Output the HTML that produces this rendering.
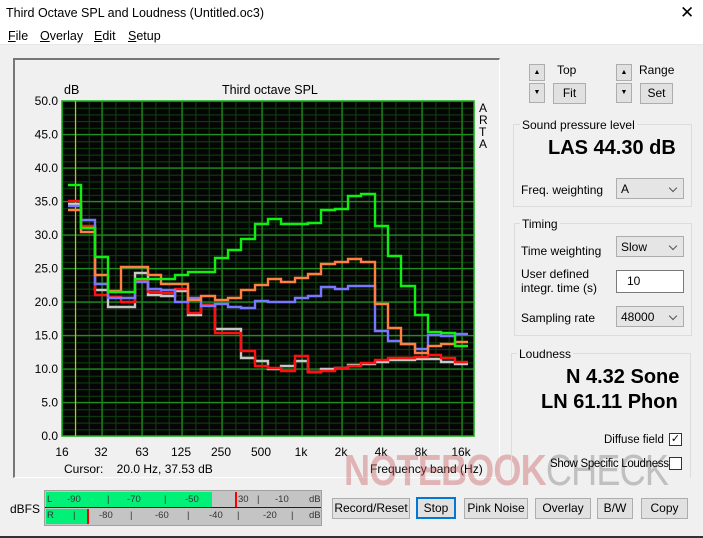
<!DOCTYPE html><html><head><style>
body{margin:0;width:703px;height:538px;background:#f0f0f0;font-family:"Liberation Sans",sans-serif;font-size:12px;color:#000;position:relative;overflow:hidden}
.a{position:absolute;white-space:nowrap}
.btn{position:absolute;background:#e1e1e1;border:1px solid #adadad;box-sizing:border-box;text-align:center;font-size:12px}
.grp{position:absolute;border:1px solid #dcdcdc;box-sizing:border-box}
.sel{position:absolute;background:#e5e5e5;border:1px solid #adadad;box-sizing:border-box;padding:3px 4px;font-size:12px}
.sel:after{content:"";position:absolute;right:7px;top:6px;width:5px;height:5px;border-right:1px solid #555;border-bottom:1px solid #555;transform:rotate(45deg)}
.u{text-decoration:underline}
</style></head><body>
<div class="a" style="left:0;top:0;width:703px;height:30px;background:#fff"></div>
<div class="a" style="left:6px;top:6px;font-size:12.5px">Third Octave SPL and Loudness (Untitled.oc3)</div>
<div class="a" style="left:680px;top:3px;font-size:17px;font-weight:200">✕</div>
<div class="a" style="left:0;top:30px;width:703px;height:14px;background:#fff"></div>
<div class="a" style="left:8px;top:29px;font-size:12.5px"><span class="u">F</span>ile</div>
<div class="a" style="left:40px;top:29px;font-size:12.5px"><span class="u">O</span>verlay</div>
<div class="a" style="left:94px;top:29px;font-size:12.5px"><span class="u">E</span>dit</div>
<div class="a" style="left:128px;top:29px;font-size:12.5px"><span class="u">S</span>etup</div>
<div class="a" style="left:0;top:44px;width:703px;height:1px;background:#e6e6e6"></div>
<div class="a" style="left:13px;top:58px;width:487px;height:420px;border-top:2px solid #777;border-left:2px solid #777;border-right:1px solid #fff;border-bottom:1px solid #fff;box-sizing:border-box"></div>
<div class="a" style="left:64px;top:83px;font-size:12.5px">dB</div>
<div class="a" style="left:222px;top:83px;font-size:12.5px">Third octave SPL</div>
<div class="a" style="left:479px;top:102px;font-size:12px;line-height:12px">A<br>R<br>T<br>A</div>
<svg class="a" style="left:0;top:0" width="703" height="538">
<defs>
<pattern id="h" x="62" y="101" width="13.333" height="6.7" patternUnits="userSpaceOnUse"><rect width="13.333" height="6.7" fill="#050505"/><path d="M0 0.5H13.4M0.5 0V6.7" stroke="#0c3f0c" stroke-width="1.2"/></pattern>
</defs>
<rect x="62" y="101" width="412" height="335" fill="url(#h)"/>
<g stroke="#1f8f1f" stroke-width="1.2">
<path d="M62 134.5H474M62 168H474M62 201.5H474M62 235H474M62 268.5H474M62 302H474M62 335.5H474M62 369H474M62 402.5H474"/>
<path d="M102 101V436M142 101V436M182 101V436M222 101V436M262 101V436M302 101V436M342 101V436M382 101V436M422 101V436M462 101V436"/>
</g>
<rect x="62" y="101" width="412" height="335" fill="none" stroke="#11b011" stroke-width="1.5"/>
<path d="M75.5 101V436" stroke="#d0c000" stroke-width="1.2"/>
<g fill="none" stroke-width="2.4">
<path stroke="#c8c8c8" d="M68 204H81V228H95V290H108V307H135V273H148V295H161V296H175V291H188V315H201V305H215V329H241V358H255V361H268V369H281V366H295V361H308V372H321V369H335V368H348V365H361V364H375V362H388V360H415V359H441V362H455V364H468"/>
<path stroke="#ff1010" d="M68 201H81V226H95V295H108V297H121V302H135V280H148V292H161V293H175V289H188V313H201V305H215V333H241V351H255V366H268V368H281V371H295V356H308V372H321V371H335V368H348V366H361V363H375V360H388V358H415V357H428V355H441V358H455V362H468"/>
<path stroke="#7878ff" d="M68 206H81V220H95V284H108V298H135V282H148V289H161V290H175V302H188V298H201V306H215V304H228V307H241V308H255V301H268V302H295V298H308V296H321V287H335V289H348V286H375V331H388V341H401V344H415V349H428V335H441V336H455V334H468"/>
<path stroke="#ff8040" d="M68 210H81V232H95V275H108V291H121V267H148V275H161V284H188V300H201V296H215V300H228V298H241V290H255V285H268V279H281V282H295V278H308V274H321V264H335V262H348V259H361V262H375V304H388V328H401V344H415V353H428V346H441V344H455V342H468"/>
<path stroke="#10f010" d="M68 185H81V228H95V257H108V292H135V279H175V275H188V272H215V258H228V250H241V239H255V224H268V219H281V224H308V223H321V210H335V209H348V196H361V194H375V226H388V256H401V286H415V315H428V332H441V333H455V346H468"/>
</g>
<g font-size="12" text-anchor="end" font-family="Liberation Sans">
<text x="58" y="105">50.0</text><text x="58" y="138.5">45.0</text><text x="58" y="172">40.0</text><text x="58" y="205.5">35.0</text><text x="58" y="239">30.0</text><text x="58" y="272.5">25.0</text><text x="58" y="306">20.0</text><text x="58" y="339.5">15.0</text><text x="58" y="373">10.0</text><text x="58" y="406.5">5.0</text><text x="58" y="440">0.0</text>
</g>
<g font-size="12" text-anchor="middle" font-family="Liberation Sans">
<text x="62" y="456">16</text><text x="101" y="456">32</text><text x="142" y="456">63</text><text x="181" y="456">125</text><text x="221" y="456">250</text><text x="261" y="456">500</text><text x="301" y="456">1k</text><text x="341" y="456">2k</text><text x="381" y="456">4k</text><text x="421" y="456">8k</text><text x="461" y="456">16k</text>
</g>
</svg>
<div class="a" style="left:64px;top:462px">Cursor:&nbsp;&nbsp;&nbsp;&nbsp;20.0 Hz, 37.53 dB</div>
<div class="a" style="left:370px;top:462px">Frequency band (Hz)</div>
<!-- meter -->
<div class="a" style="left:10px;top:502px">dBFS</div>
<div class="a" style="left:44px;top:490px;width:278px;height:36px;background:#c4c4c4;border:1px solid #a0a0a0;box-sizing:border-box"></div>
<div class="a" style="left:46px;top:492px;width:166px;height:15px;background:#00f078"></div>
<div class="a" style="left:46px;top:509px;width:41px;height:15px;background:#00f078"></div>
<div class="a" style="left:45px;top:507px;width:276px;height:1px;background:#222"></div>
<div class="a" style="left:235px;top:492px;width:2px;height:15px;background:#f00"></div>
<div class="a" style="left:87px;top:509px;width:2px;height:15px;background:#f00"></div>
<div class="a" style="left:47px;top:494px;font-size:9.5px;color:#333;width:275px">L<span style="position:absolute;left:20px">-90</span><span style="position:absolute;left:60px">|</span><span style="position:absolute;left:80px">-70</span><span style="position:absolute;left:117px">|</span><span style="position:absolute;left:138px">-50</span><span style="position:absolute;left:191px">30</span><span style="position:absolute;left:210px">|</span><span style="position:absolute;left:228px">-10</span><span style="position:absolute;left:262px">dB</span></div>
<div class="a" style="left:47px;top:510px;font-size:9.5px;color:#333;width:275px">R<span style="position:absolute;left:26px">|</span><span style="position:absolute;left:52px">-80</span><span style="position:absolute;left:83px">|</span><span style="position:absolute;left:108px">-60</span><span style="position:absolute;left:140px">|</span><span style="position:absolute;left:162px">-40</span><span style="position:absolute;left:190px">|</span><span style="position:absolute;left:216px">-20</span><span style="position:absolute;left:244px">|</span><span style="position:absolute;left:262px">dB</span></div>
<div class="a" style="left:322px;top:446px;width:370px;height:60px;overflow:hidden">
<div class="a" style="left:22px;top:0;font-size:44px;font-weight:bold;color:rgba(200,90,90,0.4);transform:scaleX(0.82);transform-origin:0 0;letter-spacing:-1px">NOTEBOOK<span style="color:rgba(120,120,120,0.4);font-weight:normal">CHECK</span></div>
</div>
<div class="btn" style="left:332px;top:498px;width:78px;height:21px;line-height:19px">Record/Reset</div>
<div class="btn" style="left:416px;top:497px;width:40px;height:22px;line-height:18px;border:2px solid #0078d7">Stop</div>
<div class="btn" style="left:464px;top:498px;width:64px;height:21px;line-height:19px">Pink Noise</div>
<div class="btn" style="left:535px;top:498px;width:56px;height:21px;line-height:19px">Overlay</div>
<div class="btn" style="left:597px;top:498px;width:36px;height:21px;line-height:19px">B/W</div>
<div class="btn" style="left:641px;top:498px;width:47px;height:21px;line-height:19px">Copy</div>
<!-- right -->
<div class="btn" style="left:529px;top:64px;width:16px;height:17px;font-size:7px;line-height:15px">▲</div>
<div class="btn" style="left:529px;top:83px;width:16px;height:20px;font-size:7px;line-height:18px">▼</div>
<div class="a" style="left:557px;top:63px">Top</div>
<div class="btn" style="left:553px;top:83px;width:33px;height:21px;line-height:19px">Fit</div>
<div class="btn" style="left:616px;top:64px;width:16px;height:17px;font-size:7px;line-height:15px">▲</div>
<div class="btn" style="left:616px;top:83px;width:16px;height:20px;font-size:7px;line-height:18px">▼</div>
<div class="a" style="left:639px;top:63px">Range</div>
<div class="btn" style="left:640px;top:83px;width:33px;height:21px;line-height:19px">Set</div>
<div class="grp" style="left:513px;top:124px;width:179px;height:83px"></div>
<div class="a" style="left:520px;top:118px;background:#f0f0f0;padding:0 2px">Sound pressure level</div>
<div class="a" style="left:548px;top:137px;font-size:20px;font-weight:bold">LAS 44.30 dB</div>
<div class="a" style="left:521px;top:183px">Freq. weighting</div>
<div class="sel" style="left:616px;top:178px;width:68px;height:21px">A</div>
<div class="grp" style="left:514px;top:223px;width:178px;height:113px"></div>
<div class="a" style="left:520px;top:217px;background:#f0f0f0;padding:0 2px">Timing</div>
<div class="a" style="left:521px;top:244px">Time weighting</div>
<div class="sel" style="left:616px;top:236px;width:68px;height:21px">Slow</div>
<div class="a" style="left:521px;top:267px;line-height:14px">User defined<br>integr. time (s)</div>
<div class="a" style="left:616px;top:270px;width:68px;height:23px;background:#fff;border:1px solid #7a7a7a;box-sizing:border-box;padding:3px 10px">10</div>
<div class="a" style="left:521px;top:311px">Sampling rate</div>
<div class="sel" style="left:616px;top:306px;width:68px;height:21px">48000</div>
<div class="grp" style="left:511px;top:353px;width:180px;height:125px;border-bottom:none"></div>
<div class="a" style="left:517px;top:347px;background:#f0f0f0;padding:0 2px">Loudness</div>
<div class="a" style="left:566px;top:366px;font-size:20px;font-weight:bold">N 4.32 Sone</div>
<div class="a" style="left:541px;top:391px;font-size:20px;font-weight:bold">LN 61.11 Phon</div>
<div class="a" style="left:604px;top:434px;font-size:11.5px">Diffuse field</div>
<div class="a" style="left:669px;top:433px;width:13px;height:13px;border:1px solid #333;box-sizing:border-box;background:#fff;font-size:11px;line-height:11px;text-align:center">✓</div>
<div class="a" style="left:550px;top:458px;font-size:11.5px;letter-spacing:-0.3px">Show Specific Loudness</div>
<div class="a" style="left:669px;top:457px;width:13px;height:13px;border:1px solid #333;box-sizing:border-box;background:#fff"></div>
<div class="a" style="left:0;top:536px;width:703px;height:2px;background:#333"></div>
</body></html>
